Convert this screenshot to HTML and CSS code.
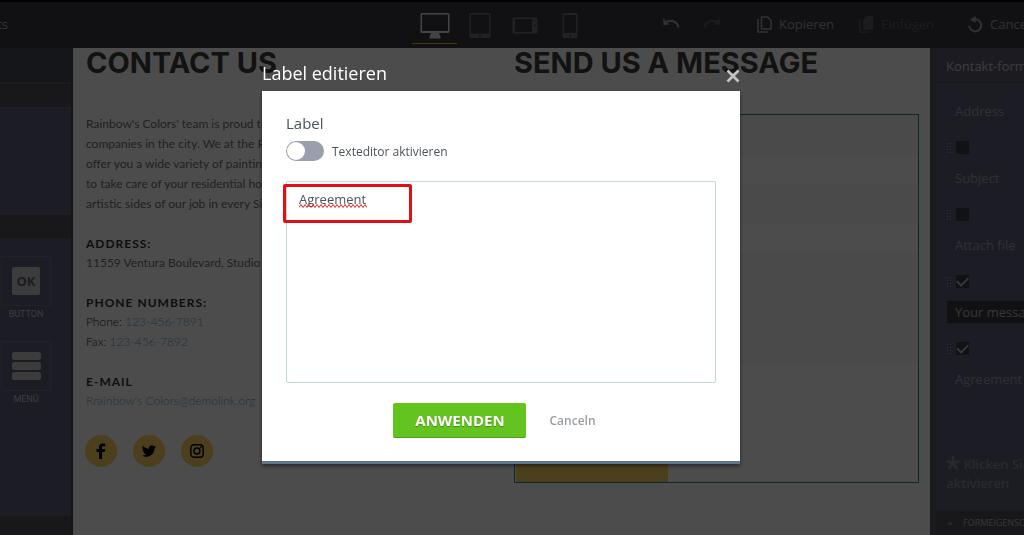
FILE: index.html
```html
<!DOCTYPE html>
<html lang="de">
<head>
    <meta charset="UTF-8">
    <meta name="viewport" content="width=device-width, initial-scale=1.0">
    <title>Label editieren</title>
    <link rel="stylesheet" href="styles.css">
</head>
<body>
    <header class="topbar">
        <div class="topbar-left"><span class="page-name">ts</span></div>
        <nav class="devices">
            <button class="device active" type="button" aria-label="Desktop">
                <svg width="30" height="26" viewBox="0 0 30 26"><path fill="currentColor" fill-rule="evenodd" d="M2 0h26a1.5 1.5 0 0 1 1.5 1.5v17a1.5 1.5 0 0 1-1.5 1.5H2A1.5 1.5 0 0 1 .5 18.500v-17A1.5 1.5 0 0 1 2 0zM2 1.500v16.500h26V1.500zM11 20h8l1 3h.5v2.500h-11V23h.5z"/></svg>
            </button>
            <button class="device" type="button" aria-label="Tablet">
                <svg width="22" height="26" viewBox="0 0 22 26"><path fill="currentColor" fill-rule="evenodd" d="M2 0h18a1.5 1.5 0 0 1 1.5 1.5v22a1.5 1.5 0 0 1-1.5 1.5H2A1.5 1.5 0 0 1 .5 23.500v-22A1.5 1.5 0 0 1 2 0zM2 1.500v19h18v-19zM11 22a1 1 0 1 0 .01 0z"/></svg>
            </button>
            <button class="device" type="button" aria-label="Querformat">
                <svg width="26" height="17" viewBox="0 0 26 17"><path fill="currentColor" fill-rule="evenodd" d="M2 .5h22a1.5 1.5 0 0 1 1.5 1.5v13a1.5 1.5 0 0 1-1.5 1.5H2A1.5 1.5 0 0 1 .5 15V2A1.5 1.5 0 0 1 2 .5zM3 2v13h17V2zM22.500 7.500a1 1 0 1 0 .01 0z"/></svg>
            </button>
            <button class="device" type="button" aria-label="Telefon">
                <svg width="16" height="26" viewBox="0 0 16 26"><path fill="currentColor" fill-rule="evenodd" d="M2 0h12a1.5 1.5 0 0 1 1.5 1.5v22a1.5 1.5 0 0 1-1.5 1.5H2A1.5 1.5 0 0 1 .5 23.500v-22A1.5 1.5 0 0 1 2 0zM2 2v18h12V2zM8 21.500a1 1 0 1 0 .01 0z"/></svg>
            </button>
        </nav>
        <div class="actions">
            <button class="history" type="button" aria-label="Rückgängig">
                <svg width="18" height="12" viewBox="0 0 18 12"><path fill="none" stroke="currentColor" stroke-width="2" d="M3 4.500c5-3 12-2 13.500 5"/><path fill="currentColor" d="M1 0l.5 7 6-.5z"/></svg>
            </button>
            <button class="history off" type="button" aria-label="Wiederholen">
                <svg width="18" height="12" viewBox="0 0 18 12"><path fill="none" stroke="currentColor" stroke-width="2" d="M15 4.500c-5-3-12-2-13.500 5"/><path fill="currentColor" d="M17 0l-.5 7-6-.5z"/></svg>
            </button>
            <button class="action copy" type="button">
                <svg width="15" height="17" viewBox="0 0 15 17"><path fill="none" stroke="currentColor" stroke-width="1.500" d="M1 3v13h10M4.500 1h6l3.500 3.500V13H4.500z"/></svg>
                Kopieren
            </button>
            <button class="action paste off" type="button">
                <svg width="15" height="17" viewBox="0 0 15 17"><path fill="none" stroke="currentColor" stroke-width="1.500" d="M1 3v13h10"/><path fill="currentColor" d="M8 0h6v14H4V4z"/></svg>
                Einfügen
            </button>
            <button class="action cancel" type="button">
                <svg width="15" height="17" viewBox="0 0 15 17"><path fill="none" stroke="currentColor" stroke-width="2" d="M6 3.500a6 6 0 1 1-4.800 6"/><path fill="currentColor" d="M2 3.500L7.500 0v7z"/></svg>
                Canceln
            </button>
        </div>
    </header>

    <div class="workspace">
        <aside class="widgets">
            <div class="widgets-head"></div>
            <div class="widgets-bar"></div>
            <div class="widgets-box"></div>
            <div class="widgets-bar"></div>
            <div class="widgets-list">
                <button class="widget" type="button">
                    <span class="widget-icon"><span class="ok">OK</span></span>
                    BUTTON
                </button>
                <button class="widget" type="button">
                    <span class="widget-icon">
                        <svg width="29" height="28" viewBox="0 0 29 28" fill="currentColor"><rect width="29" height="8" rx="2.500"/><rect y="10" width="29" height="8" rx="2.500"/><rect y="20" width="29" height="8" rx="2.500"/></svg>
                    </span>
                    MENÜ
                </button>
            </div>
            <div class="widgets-foot"></div>
        </aside>

        <main class="page">
            <section class="contact">
                <h2>CONTACT US</h2>
                <p class="about">Rainbow's Colors' team is proud to be<br>companies in the city. We at the Rainbow<br>offer you a wide variety of painting jobs<br>to take care of your residential home and<br>artistic sides of our job in every Single</p>
                <h3>ADDRESS:</h3>
                <p>11559 Ventura Boulevard, Studio City</p>
                <h3>PHONE NUMBERS:</h3>
                <p class="phone">Phone: <a href="#">123-456-7891</a><br>Fax: <a href="#">123-456-7892</a></p>
                <h3>E-MAIL</h3>
                <p class="phone"><a href="#">Rrainbow's Colors@demolink.org</a></p>
                <div class="social">
                    <a href="#" aria-label="Facebook">
                        <svg width="16" height="16" viewBox="0 0 16 16"><path fill="currentColor" d="M6 16V9H3.500V6H6V4.200C6 1.500 7.500.5 9.500.5h2.700V3.200h-1.700C9.500 3.200 9 3.600 9 4.500V6h3.200l-.5 3H9v7z"/></svg>
                    </a>
                    <a href="#" aria-label="Twitter">
                        <svg width="14" height="14" viewBox="0 0 24 24"><path fill="currentColor" d="M23.950 4.570a10 10 0 0 1-2.820.770 4.960 4.960 0 0 0 2.160-2.720c-.950.550-2 .950-3.130 1.180a4.920 4.920 0 0 0-8.380 4.480C7.690 8.090 4.070 6.130 1.640 3.160a4.920 4.920 0 0 0 1.520 6.570 4.900 4.900 0 0 1-2.230-.610v.060a4.920 4.920 0 0 0 3.950 4.830 5 5 0 0 1-2.210.080 4.940 4.940 0 0 0 4.600 3.420A9.870 9.870 0 0 1 0 19.540a13.990 13.990 0 0 0 7.550 2.210c9.050 0 14-7.500 14-13.980 0-.210 0-.420-.020-.630a9.940 9.940 0 0 0 2.420-2.570z"/></svg>
                    </a>
                    <a href="#" aria-label="Instagram">
                        <svg width="14" height="14" viewBox="0 0 14 14" fill="none" stroke="currentColor" stroke-width="1.400"><rect x=".8" y=".8" width="12.400" height="12.400" rx="3.200"/><circle cx="7" cy="7" r="3"/><circle cx="10.800" cy="3.200" r=".3"/></svg>
                    </a>
                </div>
            </section>
            <section class="message">
                <h2>SEND US A MESSAGE</h2>
                <form class="message-form">
                    <input type="text" aria-label="Name">
                    <input type="text" aria-label="E-Mail">
                    <textarea aria-label="Nachricht"></textarea>
                    <button type="button">SEND MESSAGE</button>
                </form>
            </section>
        </main>

        <aside class="settings">
            <h4>Kontakt-formular</h4>
            <div class="fields">
                <div class="field"><input class="field-name" type="text" value="Address" aria-label="Feld 1"></div>
                <div class="field">
                    <span class="grip"></span><input type="checkbox" aria-label="Subject Pflichtfeld">
                    <input class="field-name" type="text" value="Subject" aria-label="Feld 2">
                </div>
                <div class="field">
                    <span class="grip"></span><input type="checkbox" aria-label="Attach file Pflichtfeld">
                    <input class="field-name" type="text" value="Attach file" aria-label="Feld 3">
                </div>
                <div class="field">
                    <span class="grip"></span><input type="checkbox" aria-label="Your message Pflichtfeld" checked>
                    <input class="field-name current" type="text" value="Your message" aria-label="Feld 4">
                </div>
                <div class="field">
                    <span class="grip"></span><input type="checkbox" aria-label="Agreement Pflichtfeld" checked>
                    <textarea class="field-name" aria-label="Feld 5">Agreement</textarea>
                </div>
            </div>
            <p class="hint"><svg width="14" height="14" viewBox="0 0 14 14"><path stroke="currentColor" stroke-width="2.400" d="M7 7V0M7 7L.5 5M7 7l6.500-2M7 7l-4 6M7 7l4 6"/></svg> Klicken Sie<br>aktivieren</p>
            <div class="settings-foot"><svg width="6" height="6" viewBox="0 0 6 6"><path fill="#7c7e88" d="M3 1l3 4H0z"/></svg>FORMEIGENSCHAFTEN</div>
        </aside>
    </div>

    <div class="overlay">
        <div class="dialog" role="dialog" aria-labelledby="dialogTitle">
            <div class="dialog-head">
                <h1 id="dialogTitle">Label editieren</h1>
                <button class="close" type="button" aria-label="Schließen">
                    <svg width="14" height="14" viewBox="0 0 14 14"><path stroke="currentColor" stroke-width="2.600" d="M1.500 1.500l11 11M12.500 1.500l-11 11"/></svg>
                </button>
            </div>
            <form class="dialog-body">
                <label class="label-title" for="labelText">Label</label>
                <label class="switch"><input type="checkbox">Texteditor aktivieren</label>
                <div class="editor">
                    <textarea id="labelText" class="editor-text" spellcheck="false">Agreement</textarea>
                    <svg class="squiggle" width="68" height="4" viewBox="0 0 68 4"><path fill="none" stroke="#d9252b" d="M0 3.500l2-3 2 3 2-3 2 3 2-3 2 3 2-3 2 3 2-3 2 3 2-3 2 3 2-3 2 3 2-3 2 3 2-3 2 3 2-3 2 3 2-3 2 3 2-3 2 3 2-3 2 3 2-3 2 3 2-3 2 3 2-3 2 3 2-3 2 3"/></svg>
                    <div class="marker"></div>
                </div>
                <div class="dialog-buttons">
                    <button class="apply" type="button">ANWENDEN</button>
                    <button class="dismiss" type="button">Canceln</button>
                </div>
            </form>
        </div>
    </div>
</body>
</html>
```
FILE: styles.css
```css
* {
    box-sizing: border-box;
}

body {
    margin: 0;
    height: 100vh;
    display: flex;
    flex-direction: column;
    overflow: hidden;
    font-family: "Open Sans", "Noto Sans", sans-serif;
    font-size: 13px;
    background-color: #3b3e44;
}

h1, h2, h3, h4, p {
    margin: 0;
}

button, input, textarea {
    font: inherit;
    border: none;
    padding: 0;
    margin: 0;
    background: none;
}

svg {
    flex: none;
}

/* Top bar */
.topbar {
    height: 48px;
    flex: none;
    display: flex;
    border-top: 2px solid #0a0a0c;
    background-color: #393b41;
    color: #b4b6b8;
}

.topbar-left {
    flex: 1;
    display: flex;
    align-items: center;
    padding-bottom: 2px;
}

.page-name {
    width: 8px;
    display: flex;
    justify-content: flex-end;
    overflow: hidden;
}

.devices {
    display: flex;
    flex: none;
}

.device {
    width: 45px;
    height: 42px;
    display: flex;
    align-items: center;
    justify-content: center;
    padding-top: 6px;
    border-bottom: 1px solid transparent;
    color: #707276;
}

.device.active {
    color: #e4e4e4;
    border-bottom: 1px solid #ffb000;
}

.actions {
    width: 432px;
    flex: none;
    display: flex;
    align-items: center;
    padding-bottom: 2px;
    padding-left: 58px;
    overflow: hidden;
}

.history {
    width: 41px;
    flex: none;
    display: flex;
    justify-content: center;
    color: #a4a6a8;
}

.action {
    display: flex;
    align-items: center;
    flex: none;
    gap: 7px;
    margin-left: 25px;
    color: #a4a6a8;
}

.action.cancel {
    margin-left: 34px;
}

.off {
    color: #5e6064;
}

/* Workspace */
.workspace {
    flex: 1;
    min-height: 0;
    display: flex;
}

.widgets {
    width: 73px;
    flex: none;
    display: flex;
    flex-direction: column;
    border-right: 2px solid #45484f;
    background-color: #5e6078;
    color: #c8cacc;
}

.widgets-head {
    height: 36px;
    background-color: #474c56;
    border-bottom: 2px solid #5a5e68;
}

.widgets-bar {
    height: 25px;
    background-color: #50535c;
    border-bottom: 2px solid #5f6472;
}

.widgets-box {
    height: 106px;
    border-bottom: 2px solid #5f6472;
}

.widgets-list {
    flex: 1;
    display: flex;
    flex-direction: column;
    align-items: flex-start;
    gap: 20px;
    padding-top: 16px;
    padding-left: 1px;
}

.widget {
    display: flex;
    flex-direction: column;
    align-items: center;
    gap: 2px;
    width: 50px;
    font-family: Roboto, sans-serif;
    font-size: 9px;
    line-height: 13px;
    color: inherit;
}

.widget-icon {
    width: 50px;
    height: 50px;
    display: flex;
    align-items: center;
    justify-content: center;
    border: 1px solid #6c708a;
}

.ok {
    width: 28px;
    height: 28px;
    border-radius: 2px;
    background-color: #c8cacc;
    color: #5e6078;
    font-family: "Open Sans", sans-serif;
    font-size: 13px;
    font-weight: bold;
    line-height: 28px;
    text-align: center;
}

.widgets-foot {
    height: 21px;
    background-color: #50535c;
    border-top: 2px solid #5f6472;
}

.page {
    flex: 1;
    display: flex;
    overflow: hidden;
    background-color: #fff;
}

h2 {
    font-family: Inter, sans-serif;
    font-size: 29px;
    font-weight: bold;
    line-height: 30px;
    white-space: nowrap;
    color: #3c3c3c;
}

.contact {
    flex: 1;
    min-width: 0;
    padding-left: 12px;
    font-family: Lato, sans-serif;
    font-size: 12px;
    line-height: 20px;
    white-space: nowrap;
    color: #707070;
}

.contact > * {
    padding-left: 1px;
}

.about {
    margin-top: 36px;
}

h3 {
    margin-top: 20px;
    font-size: 12px;
    line-height: 19px;
    letter-spacing: 1px;
    color: #333;
}

.phone {
    font-weight: 300;
    color: #222;
}

.phone a {
    color: #5fa8cf;
    text-decoration: none;
}

.contact .social {
    display: flex;
    gap: 16px;
    margin-top: 24px;
    padding-left: 0;
}

.social a {
    width: 32px;
    height: 32px;
    display: flex;
    align-items: center;
    justify-content: center;
    border-radius: 50%;
    background-color: #ffd264;
    color: #000;
}

.message {
    width: 416px;
    flex: none;
}

.message-form {
    width: 405px;
    height: 369px;
    margin-top: 36px;
    display: flex;
    flex-direction: column;
    gap: 28px;
    border: 1px solid #1e8c80;
}

.message-form input {
    flex: none;
    height: 41px;
    background-color: #f7f7f7;
}

.message-form textarea {
    flex: none;
    height: 111px;
    resize: none;
    background-color: #f7f7f7;
}

.message-form button {
    width: 152px;
    height: 50px;
    margin-top: auto;
    margin-left: 1px;
    padding-top: 2px;
    background-color: #ffd264;
    font-size: 12px;
    font-weight: bold;
    color: #333;
}

/* Right panel */
.settings {
    width: 94px;
    flex: none;
    display: flex;
    flex-direction: column;
    overflow: hidden;
    white-space: nowrap;
    border-left: 6px solid #585a6a;
    background-color: #5e6078;
    color: #a0a2ae;
}

.settings h4 {
    height: 35px;
    flex: none;
    padding-left: 10px;
    line-height: 37px;
    font-size: 13px;
    font-weight: normal;
    border-bottom: 1px solid #50535c;
    background-color: #5a5d70;
    color: #c8cad0;
}

.fields {
    display: flex;
    flex-direction: column;
    gap: 18px;
    padding: 16px 0 0 10px;
}

.field {
    display: flex;
    flex-wrap: wrap;
    align-items: center;
    gap: 12px 4px;
}

.grip {
    width: 6px;
    height: 12px;
    background-image: radial-gradient(circle, #b0b2c0 1px, transparent 1px);
    background-size: 3px 3px;
}

.field input[type="checkbox"] {
    appearance: none;
    width: 13px;
    height: 13px;
    display: grid;
    place-items: center;
    background-color: #3c3e46;
}

.field input[type="checkbox"]:checked::before {
    content: "";
    width: 9px;
    height: 5px;
    margin-top: -3px;
    border-left: 2px solid #b4b6bc;
    border-bottom: 2px solid #b4b6bc;
    transform: rotate(-45deg);
}

.field-name {
    width: 130px;
    flex: none;
    height: 24px;
    padding-left: 8px;
    border: 1px solid #5a5c70;
    color: #a0a2ae;
}

.field-name.current {
    background-color: #3a3b42;
    color: #b4b6be;
}

textarea.field-name {
    height: 70px;
    padding-top: 2px;
    resize: none;
}

.hint {
    margin-top: 18px;
    padding-left: 10px;
    font-weight: 600;
    line-height: 19px;
    color: #8a8c98;
}

.hint svg {
    vertical-align: -1px;
}

.settings-foot {
    height: 25px;
    flex: none;
    display: flex;
    align-items: center;
    gap: 10px;
    margin-top: auto;
    padding-left: 11px;
    background-color: #50535c;
    font-size: 9px;
    color: #b4b6be;
}

/* Dialog */
.overlay {
    position: fixed;
    inset: 0;
    display: flex;
    align-items: flex-start;
    justify-content: center;
    padding: 56px 22px 0 0;
    background-color: rgba(0, 0, 0, 0.7);
}

.dialog {
    width: 478px;
}

.dialog-head {
    height: 35px;
    display: flex;
    align-items: center;
    justify-content: space-between;
    padding-bottom: 2px;
    color: #fff;
}

.dialog-head h1 {
    font-size: 18px;
    font-weight: normal;
}

.close {
    display: flex;
    margin-top: 6px;
    color: #c4c4c4;
}

.dialog-body {
    display: flex;
    flex-direction: column;
    padding: 21px 24px 23px;
    background-color: #fff;
    border-bottom: 3px solid #60758a;
    box-shadow: 0 2px 4px rgba(0, 0, 0, 0.5);
    color: #4b5459;
}

.label-title {
    font-size: 15px;
    line-height: 22px;
}

.switch {
    display: flex;
    align-items: center;
    gap: 8px;
    margin-top: 6px;
    height: 22px;
    font-size: 12px;
}

.switch input {
    appearance: none;
    width: 38px;
    height: 20px;
    padding: 1px;
    border-radius: 10px;
    background-color: #9a9fae;
}

.switch input::before {
    content: "";
    display: block;
    width: 18px;
    height: 18px;
    border-radius: 50%;
    background-color: #fff;
}

.editor {
    position: relative;
    display: flex;
    margin-top: 19px;
}

.editor-text {
    width: 100%;
    height: 202px;
    padding: 7px 12px;
    border: 1px solid #c3d8d8;
    border-radius: 2px;
    font-size: 13px;
    line-height: 20px;
    resize: none;
    color: #4b5459;
}

.squiggle {
    position: absolute;
    left: 13px;
    top: 23px;
}

.marker {
    position: absolute;
    left: -3px;
    top: 3px;
    width: 129px;
    height: 39px;
    border: 3px solid #e30f17;
    border-radius: 2px;
}

.dialog-buttons {
    display: flex;
    justify-content: center;
    align-items: center;
    gap: 23px;
    margin-top: 20px;
    padding-right: 13px;
}

.apply {
    width: 133px;
    height: 35px;
    border-radius: 2px;
    border-bottom: 1px solid #4fa015;
    background-color: #63c41f;
    color: #fff;
    font-size: 15px;
    font-weight: bold;
    text-shadow: 0 1px 1px rgba(0, 0, 0, 0.3);
}

.dismiss {
    font-size: 12px;
    font-weight: 600;
    color: #9a9fa3;
}
```
